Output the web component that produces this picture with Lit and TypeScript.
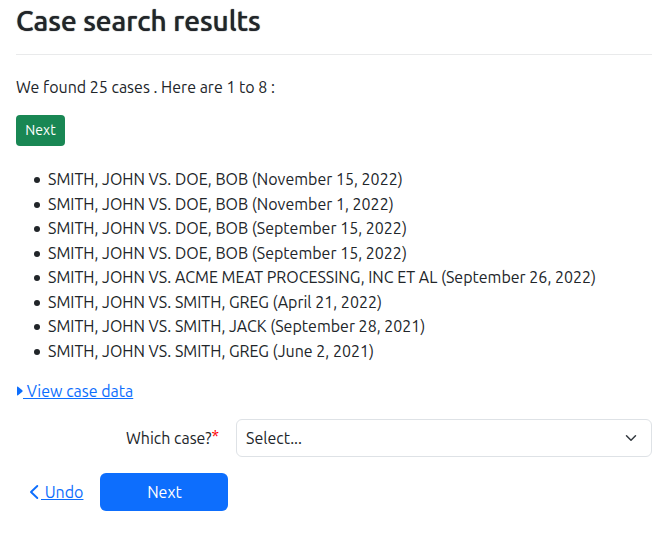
import { LitElement, html, css } from "lit";
import { customElement, state } from "lit/decorators.js";

interface CourtCase {
  title: string;
  filed: string;
}

const CASES: CourtCase[] = [
  { title: "SMITH, JOHN VS. DOE, BOB", filed: "November 15, 2022" },
  { title: "SMITH, JOHN VS. DOE, BOB", filed: "November 1, 2022" },
  { title: "SMITH, JOHN VS. DOE, BOB", filed: "September 15, 2022" },
  { title: "SMITH, JOHN VS. DOE, BOB", filed: "September 15, 2022" },
  { title: "SMITH, JOHN VS. ACME MEAT PROCESSING, INC ET AL", filed: "September 26, 2022" },
  { title: "SMITH, JOHN VS. SMITH, GREG", filed: "April 21, 2022" },
  { title: "SMITH, JOHN VS. SMITH, JACK", filed: "September 28, 2021" },
  { title: "SMITH, JOHN VS. SMITH, GREG", filed: "June 2, 2021" },
];

@customElement("app-root")
export class AppRoot extends LitElement {
  @state() private selected = "";

  static styles = css`
    :host {
      display: block;
      padding: 4px 15px 16px 16px;
      background: #fff;
      color: #212529;
      font-family: Ubuntu, "Noto Sans", sans-serif;
      font-size: 16px;
      line-height: 24px;
    }
    * {
      box-sizing: border-box;
    }
    h1 {
      margin: 0;
      padding-bottom: 16px;
      border-bottom: 1px solid #e9eaeb;
      font-size: 28px;
      font-weight: 500;
      line-height: 34px;
      text-shadow: 0 0 1px currentColor;
    }
    .summary {
      margin: 20px 0 16px;
    }
    button {
      display: block;
      border: 0;
      color: #fff;
      font-family: inherit;
      cursor: pointer;
    }
    .more {
      min-width: 49px;
      padding: 5px 9px;
      border-radius: 4px;
      background: #198754;
      font-size: 14px;
      line-height: 21px;
    }
    .cases {
      margin: 21px 0 16px;
      padding-left: 18px;
      list-style: none;
    }
    .cases li {
      display: flex;
      align-items: center;
      gap: 8px;
    }
    .cases li::before {
      content: "";
      flex: none;
      width: 6px;
      height: 6px;
      margin-top: 2px;
      border-radius: 50%;
      background: currentColor;
    }
    .cases li:nth-child(odd) {
      padding-bottom: 1px;
    }
    a {
      display: inline-flex;
      align-items: center;
      color: #0d6efd;
      text-decoration: none;
    }
    .text {
      white-space: pre;
      text-decoration: underline;
    }
    svg {
      display: block;
      flex: none;
    }
    .field {
      display: grid;
      grid-template-columns: 1fr 2fr;
      gap: 12px;
      align-items: center;
      margin: 16px 0;
    }
    .field label {
      padding-right: 5px;
      text-align: right;
    }
    .required {
      color: #f00;
      line-height: 0;
      vertical-align: 2px;
    }
    .picker {
      position: relative;
    }
    select {
      display: block;
      width: 100%;
      padding: 6px 36px 6px 9px;
      border: 1px solid #dee2e6;
      border-radius: 6px;
      appearance: none;
      background: #fff;
      color: inherit;
      font: inherit;
    }
    .arrow {
      position: absolute;
      top: 13px;
      right: 15px;
      pointer-events: none;
    }
    .actions {
      display: flex;
      align-items: center;
      gap: 17px;
      padding-left: 13px;
    }
    .submit {
      width: 128px;
      padding: 7px 12px;
      border-radius: 6px;
      background: #0d6efd;
      font-size: 16px;
      line-height: 24px;
    }
  `;

  private pick(event: Event) {
    this.selected = (event.target as HTMLSelectElement).value;
  }

  render() {
    return html`
      <main>
        <h1>Case search results</h1>
        <p class="summary">We found 25 cases . Here are 1 to 8 :</p>
        <button class="more" type="button">Next</button>
        <ul class="cases">
          ${CASES.map((c) => html`<li>${c.title} (${c.filed})</li>`)}
        </ul>
        <a href="#case-data">
          <svg width="7" height="12" viewBox="0 0 7 12" aria-hidden="true">
            <path d="M1 2.2 Q1 1 2 1.7 L6.3 5.3 Q7 6 6.3 6.7 L2 10.3 Q1 11 1 9.8Z" fill="currentColor" />
          </svg><span class="text"> View case data</span>
        </a>
        <div class="field">
          <label for="case">Which case?<span class="required">*</span></label>
          <div class="picker">
            <select id="case" .value=${this.selected} @change=${this.pick} required>
              <option value="">Select...</option>
              ${CASES.map((c, i) => html`<option value=${i}>${c.title} (${c.filed})</option>`)}
            </select>
            <svg class="arrow" width="12" height="12" viewBox="0 0 16 16" aria-hidden="true">
              <path d="m2 5 6 6 6-6" fill="none" stroke="#343a40" stroke-width="2" stroke-linecap="round" stroke-linejoin="round" />
            </svg>
          </div>
        </div>
        <div class="actions">
          <a href="#undo">
            <svg width="12" height="16" viewBox="0 0 12 16" aria-hidden="true">
              <path d="M8.3 2 2 8l6.3 6" fill="none" stroke="currentColor" stroke-width="1.9" stroke-linecap="round" stroke-linejoin="round" />
            </svg><span class="text"> Undo</span>
          </a>
          <button class="submit" type="submit">Next</button>
        </div>
      </main>
    `;
  }
}
